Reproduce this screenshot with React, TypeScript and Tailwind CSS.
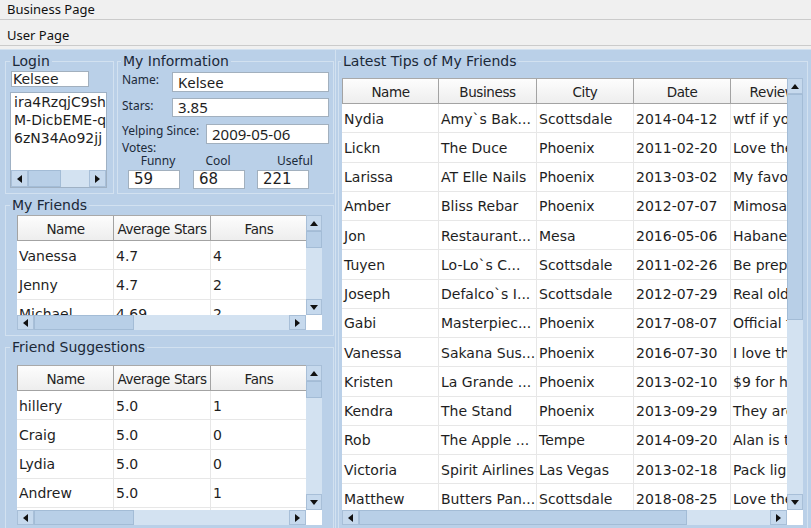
import React from "react"

type Col = { label: string; w: string }

// small black arrow used on scrollbar buttons
const Arrow = ({ dir }: { dir: "up" | "down" | "left" | "right" }) => {
  if (dir === "up" || dir === "down") {
    return (
      <svg width="8" height="5" viewBox="0 0 8 5">
        <polygon points={dir === "up" ? "0,5 4,0 8,5" : "0,0 4,5 8,0"} fill="#111" />
      </svg>
    )
  }
  return (
    <svg width="5" height="8" viewBox="0 0 5 8">
      <polygon points={dir === "left" ? "5,0 0,4 5,8" : "0,0 5,4 0,8"} fill="#111" />
    </svg>
  )
}

const ScrollBtn = ({ dir, size }: { dir: "up" | "down" | "left" | "right"; size: string }) => (
  <div className={`${size} shrink-0 flex items-center justify-center bg-[#c6d9ed] border border-[#a8bfd8]`}>
    <Arrow dir={dir} />
  </div>
)

const VScroll = ({ thumb }: { thumb: string }) => (
  <div className="w-[16px] shrink-0 flex flex-col bg-[#d3e2f1]">
    <ScrollBtn dir="up" size="h-[16px]" />
    <div className={`${thumb} shrink-0 bg-[#b8cfe7] border border-[#a3bcd6]`} />
    <div className="flex-1" />
    <ScrollBtn dir="down" size="h-[16px]" />
  </div>
)

const HScroll = ({ thumb, h }: { thumb: string; h: string }) => (
  <div className={`${h} flex-1 flex bg-[#d3e2f1]`}>
    <ScrollBtn dir="left" size="w-[17px]" />
    <div className={`${thumb} shrink-0 bg-[#b8cfe7] border border-[#a3bcd6]`} />
    <div className="flex-1" />
    <ScrollBtn dir="right" size="w-[17px]" />
  </div>
)

function DataTable({
  cols,
  rows,
  width,
  bodyH,
  vThumb,
  hThumb,
}: {
  cols: Col[]
  rows: string[][]
  width: string
  bodyH: string
  vThumb: string
  hThumb: string
}) {
  return (
    <div className={`${width} flex flex-col`}>
      <div className="flex">
        <div className="flex-1 min-w-0 overflow-hidden flex flex-col bg-white">
          <div className="flex h-[26px] shrink-0 bg-gradient-to-b from-[#fdfdfd] to-[#ededed] border-t border-[#a9a9a9]">
            {cols.map((c, i) => (
              <div
                key={c.label}
                className={`${c.w} shrink-0 flex items-center justify-center pt-[2px] border-r border-b border-[#a3a3a3] ${
                  i === 0 ? "border-l" : ""
                } text-[13.5px] tracking-[-0.4px] text-[#222] whitespace-nowrap overflow-hidden`}
              >
                {c.label}
              </div>
            ))}
          </div>
          <div className={`${bodyH} overflow-hidden`}>
            {rows.map((r, i) => (
              <div key={i} className="flex h-[29.25px] border-b border-[#e7e7e7]">
                {r.map((v, j) => (
                  <div
                    key={j}
                    className={`${cols[j].w} shrink-0 flex items-center pt-[2px] px-[2px] border-r border-[#e7e7e7] text-[14px] text-[#1e1e1e] whitespace-nowrap overflow-hidden`}
                  >
                    {v}
                  </div>
                ))}
              </div>
            ))}
          </div>
        </div>
        <VScroll thumb={vThumb} />
      </div>
      <div className="flex">
        <HScroll thumb={hThumb} h="h-[15px]" />
        <div className="w-[16px] shrink-0 bg-white" />
      </div>
    </div>
  )
}

const Field = ({ value, className }: { value: string; className: string }) => (
  <div
    className={`${className} shrink-0 bg-white border border-[#a2b0be] flex items-center px-[5px] text-[15px] leading-none text-[#1e1e1e] overflow-hidden whitespace-nowrap`}
  >
    {value}
  </div>
)

const Legend = ({ text, className }: { text: string; className: string }) => (
  <legend className={`${className} px-[2px] text-[14px] leading-[16px] text-[#1b2838]`}>{text}</legend>
)

const friendCols: Col[] = [
  { label: "Name", w: "w-[97px]" },
  { label: "Average Stars", w: "w-[97px]" },
  { label: "Fans", w: "w-[97px]" },
]

const friends = [
  ["Vanessa", "4.7", "4"],
  ["Jenny", "4.7", "2"],
  ["Michael", "4.69", "2"],
  ["Anna", "4.5", "1"],
]

const suggestions = [
  ["hillery", "5.0", "1"],
  ["Craig", "5.0", "0"],
  ["Lydia", "5.0", "0"],
  ["Andrew", "5.0", "1"],
  ["Brian", "5.0", "0"],
]

const tipCols: Col[] = [
  { label: "Name", w: "w-[97px]" },
  { label: "Business", w: "w-[98px]" },
  { label: "City", w: "w-[97px]" },
  { label: "Date", w: "w-[97px]" },
  { label: "Review", w: "w-[84px]" },
]

const tips = [
  ["Nydia", "Amy`s Bak...", "Scottsdale", "2014-04-12", "wtf if you don't get the cupcakes"],
  ["Lickn", "The Duce", "Phoenix", "2011-02-20", "Love the atmosphere"],
  ["Larissa", "AT Elle Nails", "Phoenix", "2013-03-02", "My favorite nail salon"],
  ["Amber", "Bliss Rebar", "Phoenix", "2012-07-07", "Mimosas on the patio"],
  ["Jon", "Restaurant...", "Mesa", "2016-05-06", "Habanero salsa is great"],
  ["Tuyen", "Lo-Lo`s C...", "Scottsdale", "2011-02-26", "Be prepared to wait"],
  ["Joseph", "Defalco`s I...", "Scottsdale", "2012-07-29", "Real old school deli"],
  ["Gabi", "Masterpiec...", "Phoenix", "2017-08-07", "Official favorite spot"],
  ["Vanessa", "Sakana Sus...", "Phoenix", "2016-07-30", "I love their happy hour"],
  ["Kristen", "La Grande ...", "Phoenix", "2013-02-10", "$9 for half a pound"],
  ["Kendra", "The Stand", "Phoenix", "2013-09-29", "They are the best"],
  ["Rob", "The Apple ...", "Tempe", "2014-09-20", "Alan is the man"],
  ["Victoria", "Spirit Airlines", "Las Vegas", "2013-02-18", "Pack light and bring snacks"],
  ["Matthew", "Butters Pan...", "Scottsdale", "2018-08-25", "Love the pancakes"],
]

export default function App() {
  return (
    <div className="w-[811px] h-[528px] overflow-hidden bg-[#f0f0f0] flex flex-col font-['DejaVu_Sans',sans-serif]">
      {/* page tabs */}
      <div className="h-[20px] shrink-0 flex items-center px-[7px] border-b border-[#cbcbcb] font-['Noto_Sans',sans-serif] text-[13px] text-[#111]">
        Business Page
      </div>
      <div className="h-[26px] shrink-0 flex items-center pt-[7px] px-[7px] border-b border-[#cbcbcb] font-['Noto_Sans',sans-serif] text-[13px] text-[#111]">
        User Page
      </div>
      <div className="h-[3px] shrink-0" />

      <div className="flex-1 min-h-0 flex bg-[#bad0e8] border-t border-[#d2e1f0]">
        {/* left column */}
        <div className="w-[336px] shrink-0 flex flex-col border-r border-[#d2e1f0]">
          <div className="h-[147px] shrink-0 flex items-start pt-[3px] pl-[5px] gap-[3px]">
            <fieldset className="w-[109px] h-[141px] border border-[#d2e1f0]">
              <Legend text="Login" className="ml-[4px]" />
              <div className="flex flex-col">
                <div className="mt-[2px] ml-[5px] w-[78px] h-[16px] bg-white border border-[#a2b0be] px-[1px] text-[14px] leading-[15px] text-[#1e1e1e] overflow-hidden">
                  Kelsee
                </div>
                <div className="mt-[5px] ml-[4px] w-[97px] h-[96px] bg-white border border-[#9fb1c4] flex flex-col">
                  <div className="flex-1 overflow-hidden pl-[3px] text-[14px] leading-[18px] text-[#1e1e1e] whitespace-nowrap">
                    <div>ira4RzqjC9sh</div>
                    <div>M-DicbEME-q</div>
                    <div>6zN34Ao92jj</div>
                  </div>
                  <div className="flex">
                    <HScroll thumb="w-[33px]" h="h-[17px]" />
                  </div>
                </div>
              </div>
            </fieldset>

            <fieldset className="w-[217px] h-[141px] border border-[#d2e1f0]">
              <Legend text="My Information" className="ml-[3px]" />
              <div className="flex flex-col pl-[4px] font-['Noto_Sans',sans-serif] text-[12px] text-[#1c2a3a]">
                <div className="mt-[3px] flex items-start">
                  <div className="w-[50px] leading-[16px]">Name:</div>
                  <Field value="Kelsee" className="w-[157px] h-[20px]" />
                </div>
                <div className="mt-[6px] flex items-start">
                  <div className="w-[50px] leading-[16px]">Stars:</div>
                  <Field value="3.85" className="w-[157px] h-[19px]" />
                </div>
                <div className="mt-[7px] flex items-start">
                  <div className="w-[84px] leading-[14px]">Yelping Since:</div>
                  <Field value="2009-05-06" className="w-[123px] h-[20px]" />
                </div>
                <div className="mt-[-2px] leading-[12px]">Votes:</div>
                <div className="flex h-[14px] leading-[14px]">
                  <div className="ml-[20px] w-[32px] flex justify-center">Funny</div>
                  <div className="ml-[32px] w-[24px] flex justify-center">Cool</div>
                  <div className="ml-[47px] w-[36px] flex justify-center">Useful</div>
                </div>
                <div className="mt-[2px] flex font-['DejaVu_Sans',sans-serif]">
                  <Field value="59" className="ml-[6px] w-[52px] h-[19px]" />
                  <Field value="68" className="ml-[13px] w-[52px] h-[19px]" />
                  <Field value="221" className="ml-[12px] w-[52px] h-[19px]" />
                </div>
              </div>
            </fieldset>
          </div>

          <fieldset className="ml-[5px] w-[329px] h-[139px] shrink-0 border border-[#d2e1f0]">
            <Legend text="My Friends" className="ml-[4px]" />
            <div className="mt-[2px] ml-[11px]">
              <DataTable
                cols={friendCols}
                rows={friends}
                width="w-[305px]"
                bodyH="h-[74px]"
                vThumb="h-[17px]"
                hThumb="w-[100px]"
              />
            </div>
          </fieldset>

          <fieldset className="mt-[3px] ml-[5px] w-[329px] h-[190px] shrink-0 border border-[#d2e1f0]">
            <Legend text="Friend Suggestions" className="ml-[4px]" />
            <div className="mt-[10px] ml-[11px]">
              <DataTable
                cols={friendCols}
                rows={suggestions}
                width="w-[305px]"
                bodyH="h-[119px]"
                vThumb="h-[17px]"
                hThumb="w-[100px]"
              />
            </div>
          </fieldset>
        </div>

        {/* right column */}
        <div className="flex-1 min-w-0 pt-[3px] pl-[2px]">
          <fieldset className="w-[470px] h-[476px] border border-[#d2e1f0]">
            <Legend text="Latest Tips of My Friends" className="ml-[2px]" />
            <div className="mt-[9px] ml-[3px]">
              <DataTable
                cols={tipCols}
                rows={tips}
                width="w-[461px]"
                bodyH="h-[406px]"
                vThumb="h-[226px]"
                hThumb="w-[328px]"
              />
            </div>
          </fieldset>
        </div>
      </div>
    </div>
  )
}
